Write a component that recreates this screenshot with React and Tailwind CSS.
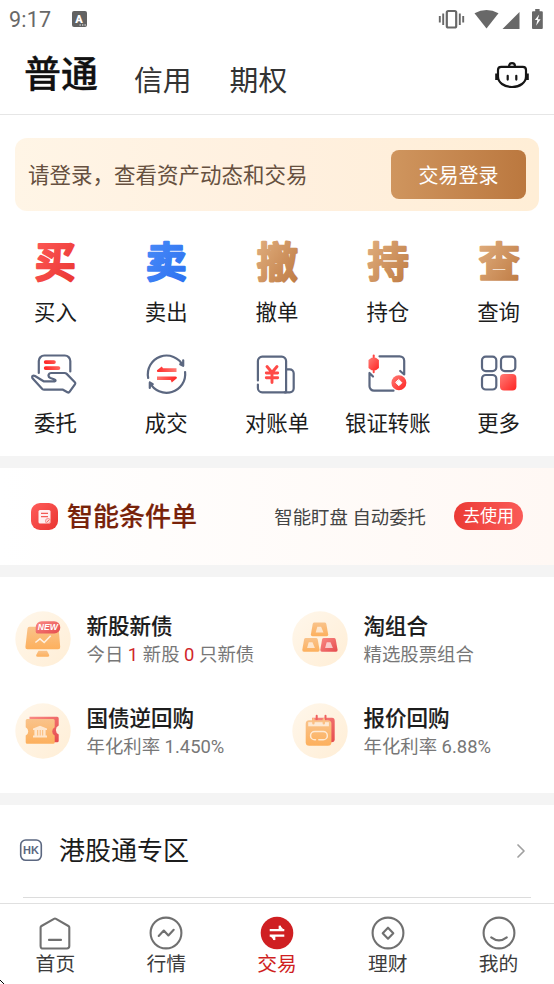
import { ChevronRight } from 'lucide-react'

const Gradients = () => (
    <svg className="absolute w-0 h-0" aria-hidden="true">
        <defs>
            <linearGradient id="red" x1="0" y1="0" x2="1" y2="1">
                <stop offset="0" stopColor="#ff5c5a" />
                <stop offset="1" stopColor="#e93430" />
            </linearGradient>
            <linearGradient id="blue" x1="0" y1="0" x2="1" y2="1">
                <stop offset="0" stopColor="#4d8df8" />
                <stop offset="1" stopColor="#2a70f0" />
            </linearGradient>
            <linearGradient id="bronze" x1="0" y1="0" x2="1" y2="1">
                <stop offset="0" stopColor="#e3b384" />
                <stop offset="1" stopColor="#bd7840" />
            </linearGradient>
            <linearGradient id="fadeRed" gradientUnits="userSpaceOnUse" x1="12" y1="0" x2="36" y2="0">
                <stop offset="0" stopColor="#ff2020" />
                <stop offset="1" stopColor="#ff8078" />
            </linearGradient>
            <linearGradient id="fadeRedBack" gradientUnits="userSpaceOnUse" x1="12" y1="0" x2="36" y2="0">
                <stop offset="0" stopColor="#ff8078" />
                <stop offset="1" stopColor="#ff2020" />
            </linearGradient>
            <linearGradient id="hot" x1="0" y1="0" x2="1" y2="1">
                <stop offset="0" stopColor="#ff7c76" />
                <stop offset="1" stopColor="#ff2422" />
            </linearGradient>
            <linearGradient id="orange" x1="0" y1="0" x2="0" y2="1">
                <stop offset="0" stopColor="#f9c38b" />
                <stop offset="1" stopColor="#fdb05d" />
            </linearGradient>
            <linearGradient id="rose" x1="0" y1="0" x2="1" y2="1">
                <stop offset="0" stopColor="#fa8a84" />
                <stop offset="1" stopColor="#e54a4d" />
            </linearGradient>
            <linearGradient id="cream" x1="0" y1="0" x2="1" y2="1">
                <stop offset="0" stopColor="#fff7eb" />
                <stop offset="1" stopColor="#ffeed6" />
            </linearGradient>
        </defs>
    </svg>
)

const Glyph = ({ char, fill }) => (
    <svg width="48" height="48" viewBox="0 0 48 48" className="overflow-visible">
        <text
            x="24.2"
            y="39"
            textAnchor="middle"
            fontSize="41"
            fontWeight="500"
            fill={`url(#${fill})`}
            stroke={`url(#${fill})`}
            strokeWidth="2.7"
            strokeLinejoin="round"
            strokeLinecap="round"
            fontFamily='"Noto Sans CJK SC", sans-serif'
        >
            {char}
        </text>
    </svg>
)

const LineIcon = ({ children }) => (
    <svg width="48" height="48" viewBox="0 -1 48 48" fill="none" stroke="#5b6780" strokeWidth="2.2" strokeLinecap="round" strokeLinejoin="round">
        {children}
    </svg>
)

const EntrustIcon = () => (
    <LineIcon>
        <path d="M7.8 23V11a5.5 5.5 0 0 1 5.5-5.5h20.5a5.5 5.5 0 0 1 5.5 5.5v10.5" />
        <path d="M1.5 28.2C.5 26 2.2 25 4 26l8.6 5.3 11 .1c1.4-.3 1.2-1.5 0-1.9l-4.2-1.5c-3-1.2-2.2-5 .9-5h13.2c1 0 1.6.3 2.2.9l7.9 8c.8.8.9 1.5.3 2.4l-5.2 7.4c-.6.9-1.4 1-2.3.5L32 39.7H13.2c-.8 0-1.3-.2-1.9-.7z" />
        <rect x="12.8" y="10.2" width="12" height="3.7" rx="1.85" fill="url(#fadeRed)" stroke="none" />
        <rect x="12.8" y="16.2" width="16.5" height="3.7" rx="1.85" fill="url(#fadeRed)" stroke="none" />
    </LineIcon>
)

const DealIcon = () => (
    <LineIcon>
        <path d="M6.2 28A18.7 18.7 0 0 1 41.2 15.8V10.3M41.2 15.8l-3-1.600" />
        <path d="M43.1 22A18.700 18.700 0 0 1 7.800 32.500V38M7.800 32.500l3 1.600" />
        <path d="M15 20.200L19.800 16.400L21 18.300H34.500V22H16Q14.400 21.800 15 20.200Z" fill="url(#fadeRed)" stroke="none" />
        <path d="M34.800 28.200L29.800 32.600L28.600 29.900H15V26.400H33.500Q35.400 26.600 34.800 28.200Z" fill="url(#fadeRedBack)" stroke="none" />
    </LineIcon>
)

const BillIcon = () => (
    <LineIcon>
        <path d="M4.900 30.500V11a4.300 4.300 0 0 1 4.300-4.300h19.600a4.300 4.300 0 0 1 4.300 4.300v31.300H9.200a4.300 4.300 0 0 1-4.300-4.300v-3.500" />
        <path d="M33.500 19.300h3.200a4 4 0 0 1 4 4v15a4 4 0 0 1-4 4h-5" />
        <path d="M14 16.500l5 6 5-6M13.300 23h11.400M13.300 27.700h11.400M19 23v9.500" stroke="#ff4a47" strokeWidth="2.900" />
    </LineIcon>
)

const TransferIcon = () => (
    <LineIcon>
        <path d="M15.500 6.300h20.200a4.500 4.500 0 0 1 4.500 4.500v13.700l-4-3.500" />
        <path d="M9 26.500l-3.500-3.500v13.200a4.500 4.500 0 0 0 4.500 4.500h19.500" />
        <path d="M9.700 5.500v16.700" stroke="#ff4643" strokeWidth="2" />
        <path d="M7.500 7.700h4.400l3 2.400v7.800l-3 2.400H7.500l-3-2.400v-7.800z" fill="url(#hot)" stroke="none" />
        <circle cx="34.900" cy="32.700" r="7.500" fill="url(#hot)" stroke="none" />
        <path d="M34.900 29.700l3 3-3 3-3-3z" fill="#fff" stroke="#fff" strokeWidth="1" />
    </LineIcon>
)

const MoreIcon = () => (
    <LineIcon>
        <rect x="7" y="6.600" width="14.300" height="14.500" rx="3.800" />
        <rect x="26" y="6.600" width="14.300" height="14.500" rx="3.800" />
        <rect x="7" y="25" width="14.300" height="14.500" rx="3.800" />
        <rect x="25" y="24" width="16.400" height="16.600" rx="4" fill="url(#hot)" stroke="none" />
    </LineIcon>
)

const RoundIcon = ({ children }) => (
    <svg width="56" height="56" viewBox="0 0 56 56" className="-mt-px shrink-0">
        <circle cx="28" cy="28" r="27.700" fill="url(#cream)" />
        {children}
    </svg>
)

const NewStockIcon = () => (
    <RoundIcon>
        <path d="M14.500 15.700h27.300q1.700 0 1.900 1.700l1.500 18.700q.1 2.200-2 2.200H12.400q-2.100 0-2-2.200l2.100-18.700q.2-1.700 2-1.700z" fill="url(#orange)" />
        <path d="M23.500 39.700h8.500l2.200 4.200q.5 1.800-1.300 1.800H22.500q-1.800 0-1.300-1.800z" fill="url(#orange)" />
        <path d="M20.400 31.500l4.600-3.700 4.200 3.700 6.500-6.800" fill="none" stroke="#fff" strokeOpacity=".8" strokeWidth="1.600" />
        <path d="M26.700 10.300h12.500a6.100 6.100 0 0 1 0 12.200H22.500q-1.800 0-1.800-1.800v-4.400a6 6 0 0 1 6-6z" fill="url(#rose)" />
        <text x="32.800" y="19.300" textAnchor="middle" fontSize="8.600" fontWeight="700" fontStyle="italic" fill="#fff" fontFamily='"Liberation Sans", sans-serif'>NEW</text>
    </RoundIcon>
)

const ingot = 'M3.500 0h10q1.500 0 1.800 1.400l1.900 10.300q.2 2-1.600 2H1.500q-1.800 0-1.600-2L1.700 1.400Q2 0 3.500 0z'

const ComboIcon = () => (
    <RoundIcon>
        {[[19, 11.500, 'orange'], [10.400, 27, 'orange'], [28.400, 27, 'rose']].map(([x, y, fill]) => (
            <g key={`${x}-${y}`} transform={`translate(${x} ${y})`}>
                <path d={ingot} fill={`url(#${fill})`} />
                <path d="M6.300 4.200h3.800l2.400 5.900H4.700z" fill="#fff" fillOpacity=".65" />
            </g>
        ))}
    </RoundIcon>
)

const RepoIcon = () => (
    <RoundIcon>
        <path d="M14.500 13.700h27.700q1.500 0 1.500 1.500v7.200a5 5 0 0 0 0 9v6.300q0 1.500-1.500 1.500H14.500z" fill="url(#rose)" />
        <path d="M12.200 16h26q1.500 0 1.500 1.500v6.800a4.600 4.600 0 0 0 0 8.200v6.700q0 1.500-1.500 1.500h-26q-1.500 0-1.500-1.500v-6.700a4.600 4.600 0 0 0 0-8.200v-6.800q0-1.500 1.500-1.500z" fill="url(#orange)" />
        <path d="M25 22.700l7 2.900v1.500h-1.400v5.300H32v2.200H18v-2.200h1.400v-5.300H18v-1.500z" fill="#fff" fillOpacity=".65" />
        <path d="M22.700 27v5.500M25.200 27v5.500M27.700 27v5.500" stroke="#fbb976" strokeWidth="1" />
    </RoundIcon>
)

const QuoteIcon = () => (
    <RoundIcon>
        <path d="M20 14.700h20q2.700 0 2.700 3v18.600q0 3-3 3H20z" fill="url(#rose)" />
        <path d="M24.700 12.800v4M33.500 12.800v4" stroke="#f0605f" strokeWidth="2" strokeLinecap="round" />
        <rect x="13.700" y="17.200" width="25.700" height="25.500" rx="3.500" fill="url(#orange)" />
        <path d="M16.200 19.200h20.700v4.100H16.200z" fill="#fff" fillOpacity=".65" />
        <path d="M21.400 16.200v4M31.800 16.200v4" stroke="#fbbf83" strokeWidth="2.400" strokeLinecap="round" />
        <path d="M23.500 36.800h-.8a4 4 0 0 1 0-8.300h8.500a4.100 4.100 0 0 1 0 8.300h-4.400" fill="none" stroke="#fff" strokeOpacity=".7" strokeWidth="1.500" strokeLinecap="round" />
    </RoundIcon>
)

const StatusBar = () => (
    <div className="flex h-[38px] items-center pl-[9px] pr-[11px] text-[#686868]">
        <span className="mt-[2px] text-[21.500px] leading-none tracking-[0.200px]">9:17</span>
        <svg width="15" height="16" viewBox="0 0 15 16" className="ml-[21px] -mt-px">
            <rect width="15" height="16" rx="2" fill="#626262" />
            <text x="7" y="11.800" textAnchor="middle" fontSize="11" fontWeight="900" fill="#fff" fontFamily="Roboto, sans-serif">A</text>
            <path d="M7.500 14h1.300M10 14h1.300M12.500 14h1.300" stroke="#fff" strokeWidth="1.200" />
        </svg>
        <svg width="106" height="22" viewBox="0 0 106 22" className="-mt-px ml-auto" fill="#686868">
            {/* vibrate, wifi, signal, battery */}
            <rect x="9.800" y="3" width="9.400" height="16.500" rx="1.500" fill="none" stroke="#686868" strokeWidth="2.200" />
            <path d="M6.200 5.500v11.500M2.800 8v6.500M22.800 5.500v11.500M26.200 8v6.500" stroke="#686868" strokeWidth="1.900" />
            <path d="M37.500 5.200Q49.500 -1.200 61.500 5.200L49.500 20.500z" />
            <path d="M82.500 4v17H65.500z" />
            <path d="M96 3.200h2.200V1h4.400v2.200h2.200q1 0 1 1V20q0 1-1 1H96q-1 0-1-1V4.200q0-1 1-1z" />
            <path d="M102.200 6.500l-4.400 5.600h2.600l-1.300 5.700 4.500-6.600h-2.700z" fill="#fff" />
        </svg>
    </div>
)

const Header = () => (
    <header className="flex h-[77px] items-center border-b border-[#e6e6e6] px-6 text-[#333]">
        <h1 className="-mt-px text-[37px] font-medium leading-none text-[#111] [-webkit-text-stroke:0.300px_#111]">普通</h1>
        <span className="ml-9 mt-[10px] text-[28.800px] leading-none">信用</span>
        <span className="ml-[38px] mt-[10px] text-[28.800px] leading-none">期权</span>
        <svg width="36" height="30" viewBox="0 0 36 30" className="-mt-[2px] ml-auto" fill="none" stroke="#151515" strokeWidth="2.200">
            <path d="M7.200 6.800h21.600q3.200 0 3.200 3.200v6.500C32 22.500 26 27 18 27S4 22.500 4 16.500V10q0-3.200 3.200-3.200z" />
            <path d="M15 6.500q0-3.300 3-3.300t3 3.300" />
            <path d="M2.700 13.500v6.500M33.300 13.500v6.500" strokeWidth="3" />
            <path d="M13.700 15.800v3.800M22.300 15.800v3.800" strokeLinecap="round" />
        </svg>
    </header>
)

const shortcuts = [
    { label: '买入', icon: <Glyph char="买" fill="red" /> },
    { label: '卖出', icon: <Glyph char="卖" fill="blue" /> },
    { label: '撤单', icon: <Glyph char="撤" fill="bronze" /> },
    { label: '持仓', icon: <Glyph char="持" fill="bronze" /> },
    { label: '查询', icon: <Glyph char="查" fill="bronze" /> },
    { label: '委托', icon: <EntrustIcon /> },
    { label: '成交', icon: <DealIcon /> },
    { label: '对账单', icon: <BillIcon /> },
    { label: '银证转账', icon: <TransferIcon /> },
    { label: '更多', icon: <MoreIcon /> },
]

const services = [
    { title: '新股新债', icon: <NewStockIcon />, desc: <>今日 <b className="font-normal text-[#d0262a]">1</b> 新股 <b className="font-normal text-[#d0262a]">0</b> 只新债</> },
    { title: '淘组合', icon: <ComboIcon />, desc: '精选股票组合' },
    { title: '国债逆回购', icon: <RepoIcon />, desc: '年化利率 1.450%' },
    { title: '报价回购', icon: <QuoteIcon />, desc: '年化利率 6.88%' },
]

const tabs = [
    {
        label: '首页',
        icon: (
            <>
                <path d="M2.600 11.500q0-1 .9-1.500L16 2.800q1-.6 2 0L30.400 10q.9.500.9 1.500v18.600q0 2.400-2.400 2.400H5q-2.400 0-2.400-2.400z" />
                <path d="M11 23.900h12" />
            </>
        ),
    },
    {
        label: '行情',
        icon: (
            <>
                <circle cx="17" cy="17" r="15.400" />
                <path d="M9.700 20l5.100-5.500 4.600 5 5.300-5.700" />
            </>
        ),
    },
    {
        label: '交易',
        active: true,
        icon: (
            <>
                <circle cx="17" cy="17" r="16.300" fill="#cf1f22" stroke="none" />
                <path d="M9.700 14.200h14.600M19.800 9.800v4.400M9.700 19.600h14.600M14.200 19.600V24" stroke="#fff" strokeWidth="2.300" strokeLinecap="butt" />
                <path d="M19.800 9.300l4.300 4.900h-4.300zM14.200 24.500l-4.300-4.900h4.300z" fill="#fff" stroke="none" />
            </>
        ),
    },
    {
        label: '理财',
        icon: (
            <>
                <circle cx="17" cy="17" r="15.400" />
                <path d="M17 11.700l5.300 5.500-5.300 5.500-5.300-5.500z" />
            </>
        ),
    },
    {
        label: '我的',
        icon: (
            <>
                <circle cx="17" cy="17" r="15.400" />
                <path d="M9.200 21.300q7.800 6 15.600 0" />
            </>
        ),
    },
]

const App = () => {
    return (
        <div className="relative flex h-[984px] w-[554px] flex-col overflow-hidden bg-[#f4f4f4] font-[Roboto,'Noto_Sans_CJK_SC',sans-serif] text-[#1c1c1c]">
            <Gradients />
            <div className="bg-white">
                <StatusBar />
                <Header />
            </div>

            <section className="h-[341px] bg-white pt-[23px]">
                <div className="mx-[15px] flex h-[73px] items-center justify-between rounded-[12px] bg-gradient-to-r from-[#fff5e6] via-[#fff0df] to-[#ffeed6] px-[13px]">
                    <p className="pt-[3px] text-[21.500px] text-[#66503f]">请登录，查看资产动态和交易</p>
                    <button className="h-[49px] w-[135px] rounded-[8px] bg-gradient-to-r from-[#cf955e] to-[#bb783f] pt-[2px] text-[20px] text-white">交易登录</button>
                </div>
                <div className="grid grid-cols-5 pt-[27px]">
                    {shortcuts.map(({ label, icon }) => (
                        <div key={label} className="flex h-[111px] flex-col items-center">
                            {icon}
                            <span className="mt-3 whitespace-nowrap text-[21.400px] leading-[30px]">{label}</span>
                        </div>
                    ))}
                </div>
            </section>

            <section className="mt-3 flex h-[97px] items-center bg-gradient-to-r from-white to-[#fff8f4] px-[31px]">
                <svg width="27" height="27" viewBox="0 0 27 27">
                    <rect width="27" height="27" rx="9" fill="url(#red)" />
                    <rect x="7.500" y="7" width="12" height="13.500" rx="1.500" fill="#fff" fillOpacity=".92" />
                    <path d="M10 10.400h7M10 13.600h7" stroke="#f25b56" strokeWidth="1.300" />
                    <circle cx="17" cy="18" r="2.600" fill="#fcd5d2" stroke="#f25b56" strokeWidth=".5" />
                    <path d="M15.800 19.200l2.400-2.400" stroke="#f25b56" strokeWidth=".8" />
                </svg>
                <h2 className="ml-[9px] pt-[2px] text-[26px] font-medium text-[#782209] [-webkit-text-stroke:0.200px_#782209]">智能条件单</h2>
                <p className="ml-auto mr-7 pt-[2px] text-[18.400px] text-[#444]">智能盯盘 自动委托</p>
                <button className="-mt-px h-[28px] w-[69px] rounded-full bg-gradient-to-r from-[#eb3a35] to-[#fa5a57] text-[17px] leading-none text-white">去使用</button>
            </section>

            <section className="mt-3 grid h-[216px] grid-cols-2 content-start bg-white pt-4">
                {services.map(({ title, icon, desc }) => (
                    <div key={title} className="flex h-[92.500px] items-center pl-[15px]">
                        {icon}
                        <div className="ml-[15.500px] pt-[3px]">
                            <h3 className="text-[21.500px] font-medium leading-[28px] [-webkit-text-stroke:0.150px_#1c1c1c]">{title}</h3>
                            <p className="text-[18.400px] leading-[28px] text-[#777]">{desc}</p>
                        </div>
                    </div>
                ))}
            </section>

            <section className="mt-3 h-[98px] bg-white px-[23px]">
                <div className="-mx-[4px] flex h-[92px] items-center">
                    <svg width="24" height="24" viewBox="0 0 24 24" className="-mt-[2px]">
                        <rect x="1.700" y="2" width="20.600" height="20.300" rx="5" fill="none" stroke="#5b6780" strokeWidth="1.600" />
                        <text x="12" y="16" textAnchor="middle" fontSize="11" fontWeight="700" fill="#5b6780" fontFamily='"Liberation Sans", sans-serif'>HK</text>
                    </svg>
                    <span className="ml-4 pt-px text-[26px]">港股通专区</span>
                    <ChevronRight className="ml-auto mr-[2px] text-[#a0a0a0]" size={24} strokeWidth={1.700} />
                </div>
                <div className="h-px bg-[#dcdcdc]" />
            </section>

            <nav className="grid h-[81px] grid-cols-5 border-t border-[#e0e0e0] bg-white pt-[11.500px]">
                {tabs.map(({ label, icon, active }) => (
                    <div key={label} className={`flex flex-col items-center ${active ? 'text-[#cf1f22]' : 'text-[#3c3c3c]'}`}>
                        <svg width="34" height="34" viewBox="0 0 34 34" fill="none" stroke="#707070" strokeWidth="2.100" strokeLinecap="round" strokeLinejoin="round">
                            {icon}
                        </svg>
                        <span className="mt-[1.500px] text-[19.800px] leading-[28px]">{label}</span>
                    </div>
                ))}
            </nav>

            {/* cursor tip */}
            <svg width="4" height="4" viewBox="0 0 4 4" className="absolute bottom-0 left-0" shapeRendering="crispEdges">
                <path d="M0 0h1v1H0zM1 1h1v1H1zM2 2h1v1H2zM3 3h1v1H3z" />
            </svg>
        </div>
    )
}

export default App
